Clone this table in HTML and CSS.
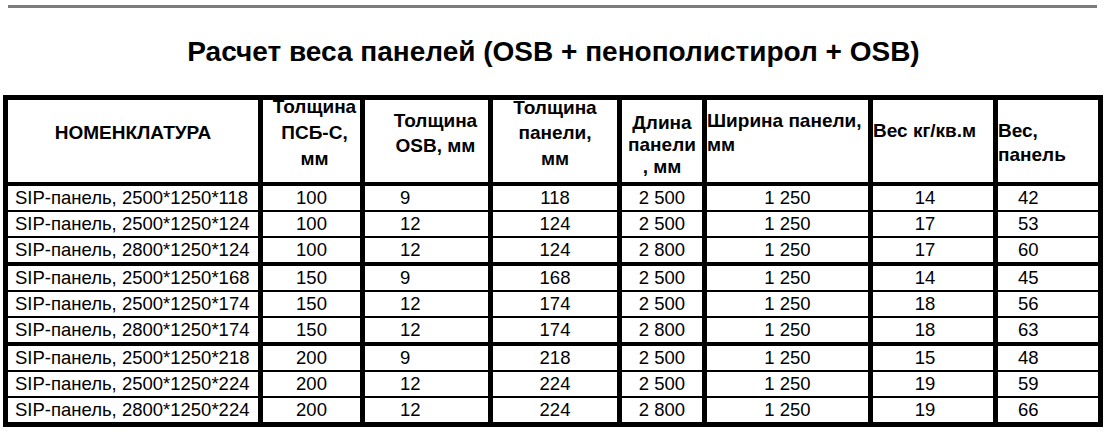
FILE: index.html
```html
<!DOCTYPE html>
<html lang="ru">
<head>
<meta charset="utf-8">
<title>Расчет веса панелей</title>
<link rel="stylesheet" href="styles.css">
</head>
<body>
<div class="page">
  <div class="rule"></div>
  <h1 class="title">Расчет веса панелей (OSB + пенополистирол + OSB)</h1>
  <table class="weights">
    <thead>
      <tr>
        <th class="h1"><div class="hd">НОМЕНКЛАТУРА</div></th>
        <th class="h2"><div class="hd">Толщина<br>ПСБ-С,<br>мм</div></th>
        <th class="h3"><div class="hd">Толщина<br>OSB, мм</div></th>
        <th class="h4"><div class="hd">Толщина<br>панели,<br>мм</div></th>
        <th class="h5"><div class="hd">Длина<br>панели<br>, мм</div></th>
        <th class="h6"><div class="hd">Ширина панели,<br>мм</div></th>
        <th class="h7"><div class="hd">Вес кг/кв.м</div></th>
        <th class="h8"><div class="hd">Вес,<br>панель</div></th>
      </tr>
    </thead>
    <tbody>
      <tr><td class="name">SIP-панель, 2500*1250*118</td><td class="ctr">100</td><td class="osb">9</td><td class="ctr">118</td><td class="ctr">2 500</td><td class="ctr">1 250</td><td class="kg">14</td><td class="wt">42</td></tr>
      <tr><td class="name">SIP-панель, 2500*1250*124</td><td class="ctr">100</td><td class="osb">12</td><td class="ctr">124</td><td class="ctr">2 500</td><td class="ctr">1 250</td><td class="kg">17</td><td class="wt">53</td></tr>
      <tr class="group-end"><td class="name">SIP-панель, 2800*1250*124</td><td class="ctr">100</td><td class="osb">12</td><td class="ctr">124</td><td class="ctr">2 800</td><td class="ctr">1 250</td><td class="kg">17</td><td class="wt">60</td></tr>
      <tr><td class="name">SIP-панель, 2500*1250*168</td><td class="ctr">150</td><td class="osb">9</td><td class="ctr">168</td><td class="ctr">2 500</td><td class="ctr">1 250</td><td class="kg">14</td><td class="wt">45</td></tr>
      <tr><td class="name">SIP-панель, 2500*1250*174</td><td class="ctr">150</td><td class="osb">12</td><td class="ctr">174</td><td class="ctr">2 500</td><td class="ctr">1 250</td><td class="kg">18</td><td class="wt">56</td></tr>
      <tr class="group-end"><td class="name">SIP-панель, 2800*1250*174</td><td class="ctr">150</td><td class="osb">12</td><td class="ctr">174</td><td class="ctr">2 800</td><td class="ctr">1 250</td><td class="kg">18</td><td class="wt">63</td></tr>
      <tr><td class="name">SIP-панель, 2500*1250*218</td><td class="ctr">200</td><td class="osb">9</td><td class="ctr">218</td><td class="ctr">2 500</td><td class="ctr">1 250</td><td class="kg">15</td><td class="wt">48</td></tr>
      <tr><td class="name">SIP-панель, 2500*1250*224</td><td class="ctr">200</td><td class="osb">12</td><td class="ctr">224</td><td class="ctr">2 500</td><td class="ctr">1 250</td><td class="kg">19</td><td class="wt">59</td></tr>
      <tr class="last"><td class="name">SIP-панель, 2800*1250*224</td><td class="ctr">200</td><td class="osb">12</td><td class="ctr">224</td><td class="ctr">2 800</td><td class="ctr">1 250</td><td class="kg">19</td><td class="wt">66</td></tr>
    </tbody>
  </table>
</div>
</body>
</html>
```

FILE: styles.css
```css
html, body {
  margin: 0;
  padding: 0;
  background: #fff;
}

body {
  font-family: "Liberation Sans", Arial, sans-serif;
  color: #000;
}

.page {
  width: 1107px;
}

.rule {
  margin: 5px 10px 0 8px;
  height: 3px;
  background: #7c7c7c;
}

.title {
  margin: 28px 0 0;
  font-size: 28px;
  line-height: 32px;
  font-weight: bold;
  text-align: center;
}

.weights {
  margin: 27px 0 0 3px;
  width: 1100px;
  table-layout: fixed;
  border-collapse: separate;
  border-spacing: 0;
  border-left: 5px solid #000;
  border-top: 5px solid #000;
}

.weights th,
.weights td {
  box-sizing: border-box;
  border-right: 5px solid #000;
  border-bottom: 2px solid #000;
  padding: 0;
  white-space: nowrap;
}

.weights th {
  height: 86px;
  border-bottom-width: 4px;
  font-size: 19px;
  font-weight: bold;
  line-height: 26px;
  vertical-align: middle;
  text-align: center;
}

.hd {
  margin-top: -16px;
}

.h1 { width: 255px; }
.h2 { width: 102px; padding-left: 6px !important; }
.h3 { width: 128px; padding-left: 18px !important; }
.h3 .hd { line-height: 25px; margin-top: -17px; }
.h4 { width: 129px; }
.h4 .hd { line-height: 25.5px; }
.h5 { width: 85px; }
.h5 .hd { line-height: 22px; margin-top: 8px; }
.h6 { width: 166px; text-align: left !important; }
.h6 .hd { line-height: 24px; }
.h7 { width: 125px; text-align: left !important; }
.h7 .hd { margin-top: -20px; }
.h8 { width: 105px; text-align: left !important; }
.h8 .hd { line-height: 24px; margin-top: 4px; }

.weights td {
  height: 26px;
  font-size: 18.5px;
  line-height: 24px;
  vertical-align: middle;
  overflow: hidden;
}

.weights tr.group-end td {
  height: 28px;
  border-bottom-width: 4px;
}

.weights tr.last td {
  height: 29px;
  border-bottom-width: 5px;
}

.name { text-align: left; padding-left: 7px !important; }
.ctr { text-align: center; }
.osb { text-align: left; padding-left: 35px !important; }
.kg { text-align: center; padding-right: 16px !important; }
.wt { text-align: left; padding-left: 20px !important; }
```
